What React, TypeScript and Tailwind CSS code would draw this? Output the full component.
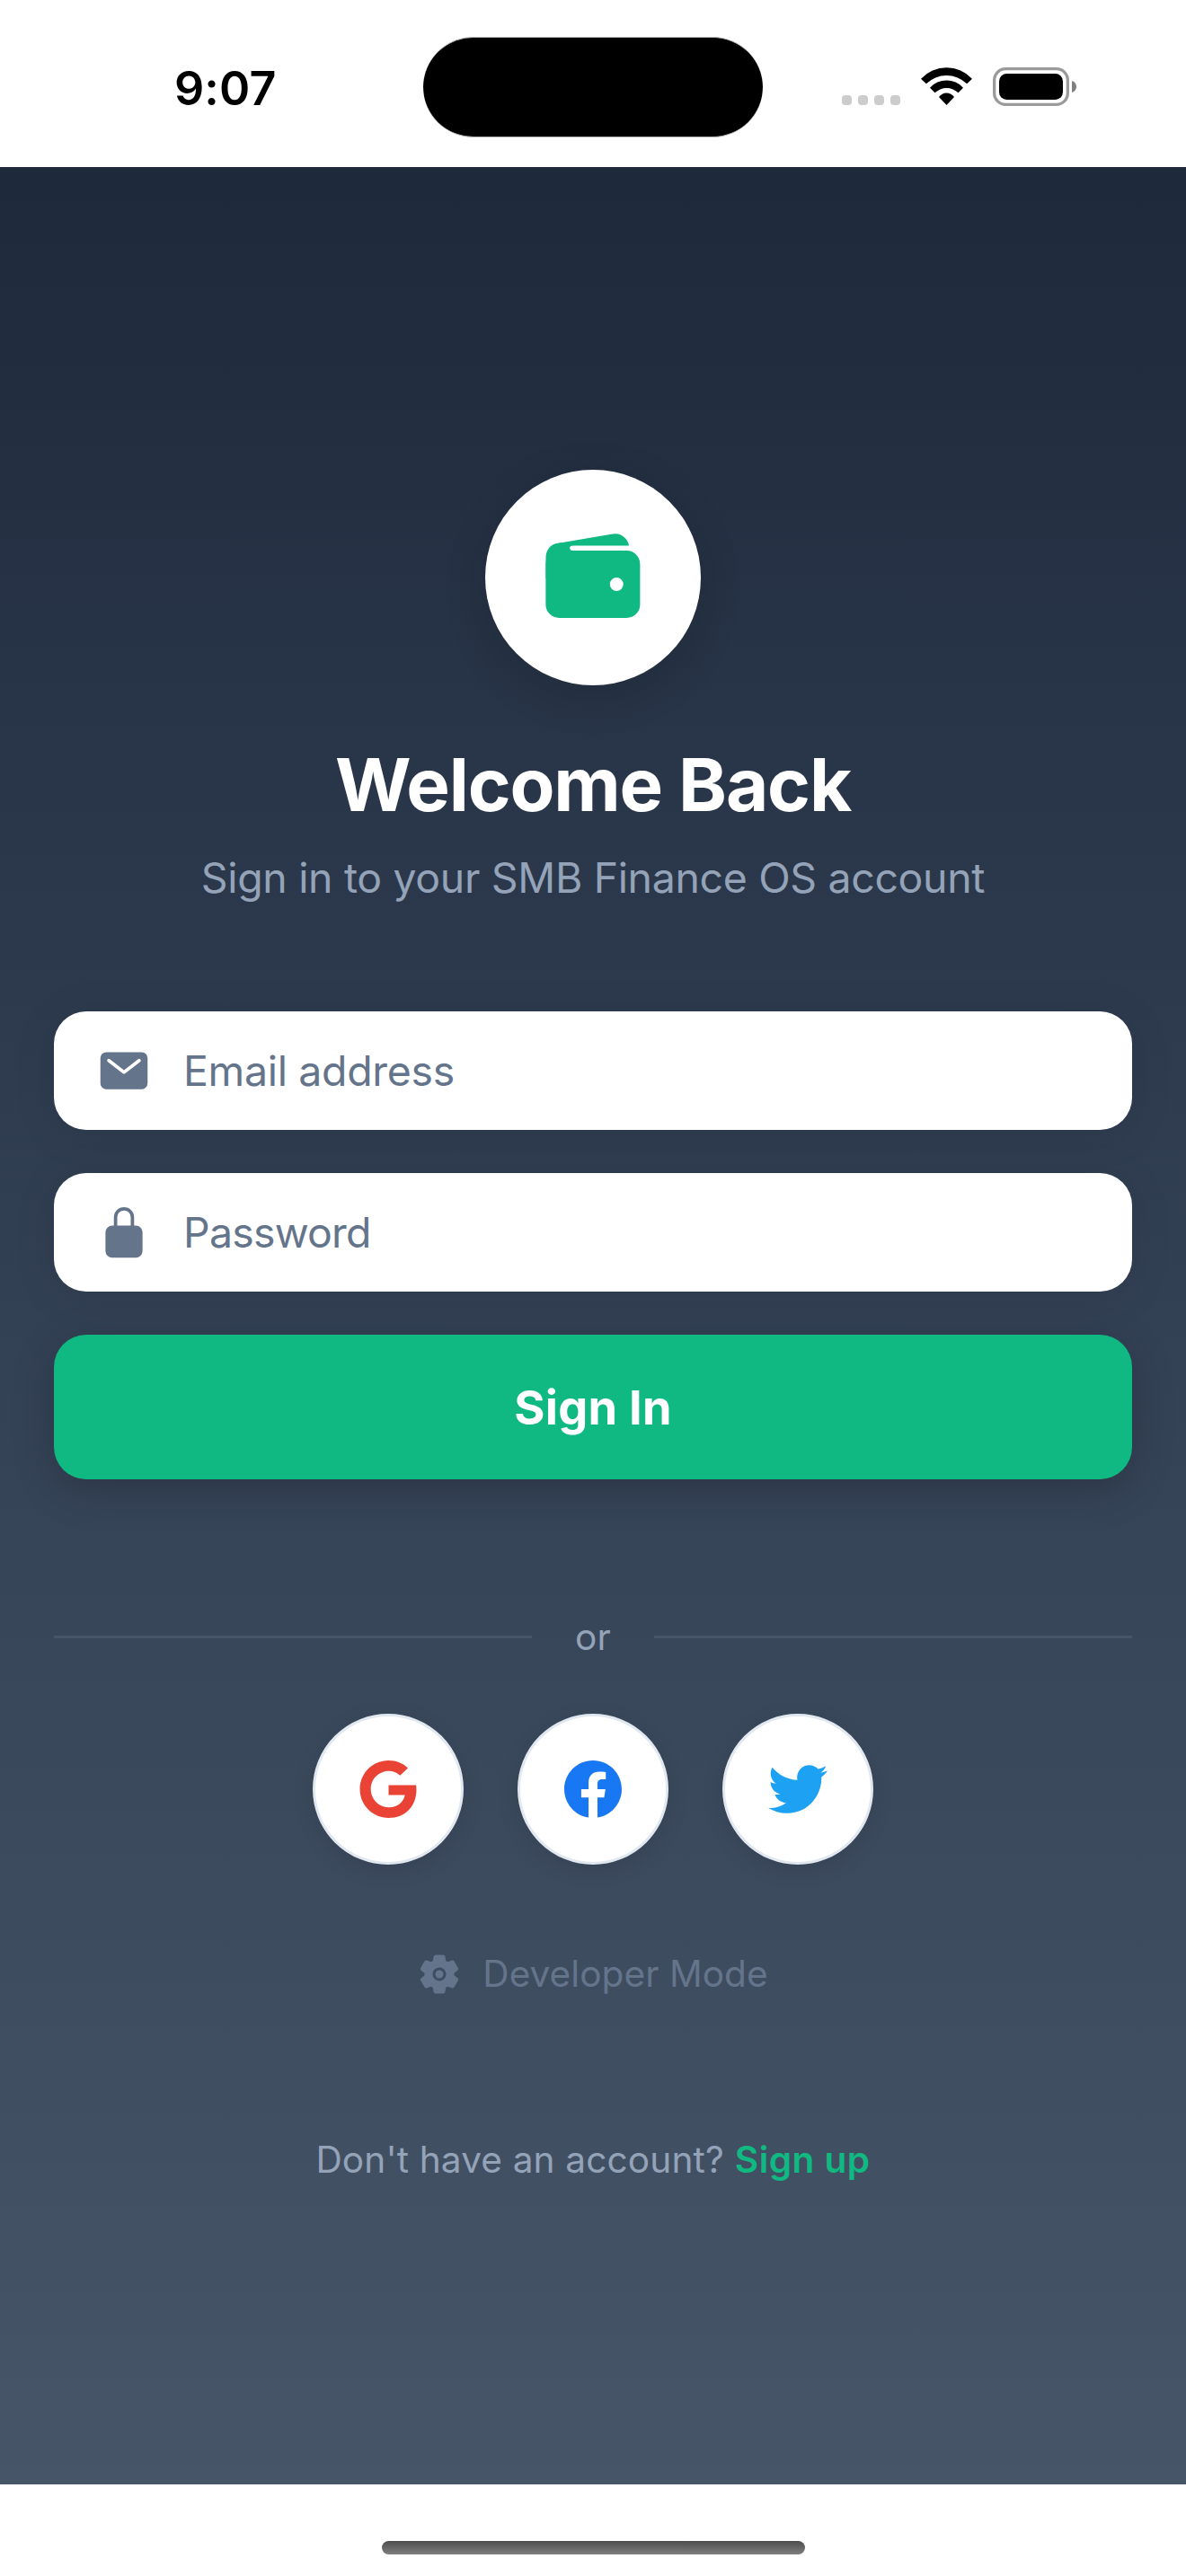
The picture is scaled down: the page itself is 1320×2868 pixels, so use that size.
import type { ReactNode } from "react";
import { FaFacebook, FaGoogle, FaTwitter } from "react-icons/fa";
import { IoLockClosed, IoMail, IoSettings, IoWallet } from "react-icons/io5";

function StatusBar() {
  return (
    <header className="flex h-[186px] shrink-0 items-start bg-white">
      <div className="w-[471px] pt-[67px] pl-[194px]">
        <p className="text-[52px] leading-[63px] font-semibold tracking-[0.1px] text-black">9:07</p>
      </div>
      <div className="mt-[41px] h-[112px] w-[378px] rounded-[60px] border-y border-[#b4b4b4] bg-black" />
      <div className="mt-[75px] ml-[88px] flex h-[43px] items-start gap-[23px]">
        <div className="mt-[31px] flex gap-[7px]">
          {[0, 1, 2, 3].map((dot) => (
            <span key={dot} className="size-[11px] rounded-[4px] bg-[#cccccc]" />
          ))}
        </div>
        <svg className="h-[42px] w-[57px]" viewBox="0 0 171 126" fill="#000">
          <path d="M0 38A116 116 0 0 1 171 38L153.500 55A96.600 96.600 0 0 0 17.500 55Z" />
          <path d="M30 68A75 75 0 0 1 141 68L124.500 85A55.500 55.500 0 0 0 46.500 85Z" />
          <path d="M60 99A31 31 0 0 1 111 99L85.500 126Z" />
        </svg>
        <svg className="h-[43px] w-[93px]" viewBox="0 0 93 43">
          <rect x="1.650" y="1.650" width="81.700" height="39.700" rx="12.500" fill="none" stroke="#9a9a9a" strokeWidth="3.300" />
          <rect x="7" y="7" width="71" height="29" rx="8.500" fill="#000" />
          <path d="M88 15c3.300 1 5 3.600 5 6.500s-1.700 5.500-5 6.500z" fill="#808080" />
        </svg>
      </div>
    </header>
  );
}

function Field({ icon, children }: { icon: ReactNode; children: ReactNode }) {
  return (
    <label className="flex h-[132px] items-center gap-9 rounded-[36px] bg-white px-12 text-[60px] text-[#64748b] shadow-[0_6px_48px_rgba(0,0,0,0.1)]">
      {icon}
      {children}
    </label>
  );
}

function SocialButton({ children }: { children: ReactNode }) {
  return (
    <button className="flex size-[168px] items-center justify-center rounded-full border-[3px] border-[#e2e8f0] bg-white text-[66px] shadow-[0_6px_24px_rgba(0,0,0,0.1)]">
      {children}
    </button>
  );
}

export default function App() {
  return (
    <div className="flex h-[2868px] w-[1320px] flex-col overflow-hidden bg-white font-[Inter,sans-serif]">
      <StatusBar />
      <main className="flex h-[2580px] flex-col bg-linear-[180deg,#1e293b,#334155_50%,#475569] px-[60px] pt-[337px]">
        <div className="flex flex-col items-center">
          <div className="flex size-[240px] items-center justify-center rounded-full bg-white text-[120px] text-[#10b981] shadow-[0_12px_48px_rgba(0,0,0,0.15)]">
            <IoWallet />
          </div>
          <h1 className="mt-[61px] text-[81.600px] leading-[99px] font-bold tracking-[-1.200px] text-white">Welcome Back</h1>
          <p className="mt-[26px] text-[46.400px] leading-[56px] tracking-[-0.320px] text-[#94a3b8]">
            Sign in to your SMB Finance OS account
          </p>
        </div>

        <form className="mt-[121px] flex flex-col gap-12">
          <Field icon={<IoMail />}>
            <span className="text-[46.400px] leading-[56px] tracking-[-0.290px]">Email address</span>
          </Field>
          <Field icon={<IoLockClosed />}>
            <span className="text-[46.400px] leading-[56px] tracking-[-0.750px]">Password</span>
          </Field>
          <button
            type="button"
            className="flex h-[161px] items-start justify-center rounded-[36px] bg-[#10b981] pt-[49px] text-[52.300px] leading-[64px] font-bold tracking-[0.300px] text-white shadow-[0_12px_48px_rgba(0,0,0,0.2)]"
          >
            Sign In
          </button>
        </form>

        <div className="mt-[151px] flex items-center">
          <div className="h-[3px] flex-1 bg-[#475569]" />
          <span className="w-[136px] text-center text-[40.600px] leading-[49px] tracking-[0.200px] text-[#94a3b8]">or</span>
          <div className="h-[3px] flex-1 bg-[#475569]" />
        </div>

        <div className="mt-[61px] flex justify-center gap-[60px]">
          <SocialButton>
            <FaGoogle className="text-[#ea4335]" />
          </SocialButton>
          <SocialButton>
            <FaFacebook className="text-[#1877f2]" />
          </SocialButton>
          <SocialButton>
            <FaTwitter className="text-[#1da1f2]" />
          </SocialButton>
        </div>

        <button className="mt-[97px] flex h-[49px] items-center justify-center gap-6 text-[#64748b]">
          <IoSettings className="size-12" />
          <span className="text-[40.600px] leading-[49px] tracking-[0.050px]">Developer Mode</span>
        </button>

        <p className="mt-[158px] flex justify-center gap-3 text-[40.600px] leading-[49px]">
          <span className="tracking-[0.140px] text-[#94a3b8]">Don't have an account?</span>
          <a className="font-semibold tracking-[0.450px] text-[#10b981]">Sign up</a>
        </p>
      </main>
      <footer className="flex h-[102px] justify-center bg-white pt-[63px]">
        <div className="h-[15px] w-[471px] rounded-full bg-linear-to-b from-[#4d4d4d] to-[#7f7f7f]" />
      </footer>
    </div>
  );
}
